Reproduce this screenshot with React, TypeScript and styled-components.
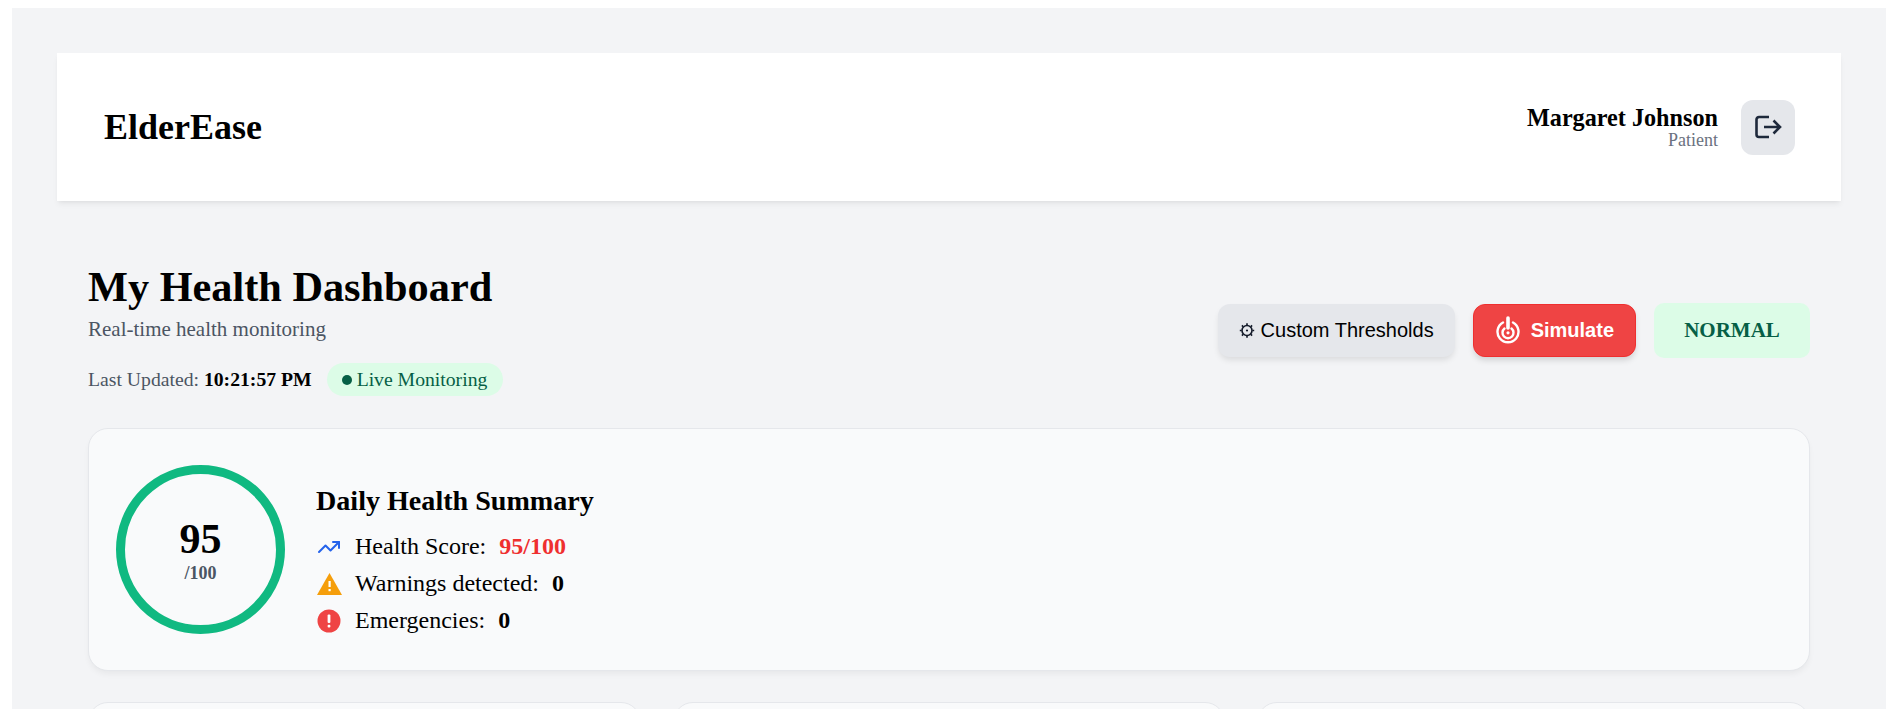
import React from 'react';
import styled, { createGlobalStyle } from 'styled-components';
import { TrendingUp } from 'lucide-react';

const GlobalStyle = createGlobalStyle`
  html, body {
    margin: 0;
    height: 709px;
    overflow: hidden;
    background: #ffffff;
    font-family: "Liberation Serif", "Times New Roman", serif;
    color: #000000;
  }
`;

const Page = styled.div`
  margin: 8px 5px 0 12px;
  padding: 45px 45px 40px;
  background: #f3f4f6;
  min-height: 900px;
`;

const Header = styled.header`
  height: 148px;
  padding: 0 46px 0 47px;
  background: #ffffff;
  box-shadow: 0 4px 6px -1px rgba(0, 0, 0, 0.06), 0 2px 4px -2px rgba(0, 0, 0, 0.06);
  display: flex;
  align-items: center;
  justify-content: space-between;
`;

const Logo = styled.div`
  font-size: 36px;
  font-weight: 700;
`;

const UserArea = styled.div`
  display: flex;
  align-items: center;
  gap: 23px;
`;

const UserText = styled.div`
  text-align: right;
`;

const UserName = styled.div`
  font-size: 24.2px;
  font-weight: 700;
  line-height: 26px;
`;

const UserRole = styled.div`
  font-size: 18px;
  line-height: 19px;
  color: #6b7280;
`;

const IconButton = styled.button`
  width: 54px;
  height: 55px;
  border: none;
  border-radius: 12px;
  background: #e5e7eb;
  display: flex;
  align-items: center;
  justify-content: center;
  padding: 0;
`;

const Main = styled.main`
  padding: 0 31px;
`;

const TitleRow = styled.section`
  display: flex;
  justify-content: space-between;
  align-items: center;
  margin-top: 61px;
`;

const Title = styled.h1`
  margin: 0;
  font-size: 42.3px;
  font-weight: 700;
  line-height: 50px;
`;

const Subtitle = styled.p`
  margin: 5px 0 0;
  font-size: 21px;
  line-height: 24px;
  color: #4b5563;
`;

const StatusLine = styled.div`
  display: flex;
  align-items: center;
  gap: 15px;
  margin-top: 22px;
  font-size: 19.7px;
  color: #4b5563;
`;

const Time = styled.strong`
  color: #000000;
`;

const LiveBadge = styled.span`
  display: inline-flex;
  align-items: center;
  height: 33px;
  padding: 0 16px 0 15px;
  border-radius: 17px;
  background: #dcfce7;
  color: #065f46;
  font-size: 19.7px;
`;

const LiveDot = styled.i`
  width: 10px;
  height: 10px;
  margin-right: 5px;
  border-radius: 50%;
  background: #065f46;
`;

const Actions = styled.div`
  display: flex;
  align-items: center;
  gap: 18px;
  margin-top: 2px;
`;

const ThresholdButton = styled.button`
  height: 53px;
  padding: 0 21px;
  border: none;
  border-radius: 12px;
  background: #e5e7eb;
  color: #000000;
  font-family: "Liberation Sans", Arial, sans-serif;
  font-size: 20px;
  box-shadow: 0 4px 6px -1px rgba(0, 0, 0, 0.1);
  display: flex;
  align-items: center;
  gap: 6px;
`;

const SimulateButton = styled.button`
  height: 53px;
  padding: 0 21px 0 22px;
  border: 1px solid #ef2f2f;
  border-radius: 12px;
  background: #ef4444;
  color: #ffffff;
  font-family: "Liberation Sans", Arial, sans-serif;
  font-size: 20px;
  font-weight: 700;
  box-shadow: 0 4px 6px -1px rgba(0, 0, 0, 0.15);
  display: flex;
  align-items: center;
  gap: 11px;
`;

const StatusPill = styled.div`
  height: 55px;
  width: 156px;
  border-radius: 10px;
  background: #dcfce7;
  color: #065f46;
  font-size: 21px;
  font-weight: 700;
  display: flex;
  align-items: center;
  justify-content: center;
`;

const SummaryCard = styled.section`
  margin-top: 32px;
  height: 243px;
  box-sizing: border-box;
  padding: 0 27px;
  background: #f9fafb;
  border: 1px solid #e5e7eb;
  border-radius: 20px;
  box-shadow: 0 4px 6px -1px rgba(0, 0, 0, 0.05);
  display: flex;
  align-items: center;
  gap: 31px;
`;

const ScoreRing = styled.div`
  width: 169px;
  height: 169px;
  box-sizing: border-box;
  border: 9px solid #10b981;
  border-radius: 50%;
  display: flex;
  flex-direction: column;
  align-items: center;
  justify-content: center;
`;

const ScoreValue = styled.div`
  font-size: 42px;
  font-weight: 700;
  line-height: 47px;
`;

const ScoreTotal = styled.div`
  font-size: 18px;
  font-weight: 700;
  line-height: 20px;
  color: #4b5563;
`;

const SummaryBody = styled.div`
  display: flex;
  flex-direction: column;
  margin-top: 26px;
`;

const SummaryTitle = styled.h2`
  margin: -1px 0 11px;
  font-size: 28.1px;
  font-weight: 700;
  line-height: 32px;
`;

const SummaryRow = styled.div`
  display: flex;
  align-items: center;
  height: 37px;
  font-size: 24px;
`;

const RowIcon = styled.span`
  width: 26px;
  margin-right: 13px;
  display: flex;
  justify-content: center;
`;

const RowValue = styled.strong<{ $alert?: boolean }>`
  margin-left: 13px;
  color: ${(p) => (p.$alert ? '#ef2f2f' : '#000000')};
`;

const CardGrid = styled.section`
  margin-top: 31px;
  display: grid;
  grid-template-columns: repeat(3, 1fr);
  gap: 32px;
`;

const EmptyCard = styled.div`
  height: 200px;
  background: #f9fafb;
  border: 1px solid #e5e7eb;
  border-radius: 20px;
`;

const LogoutIcon = () => (
  <svg width="27" height="24" viewBox="0 0 27 24" fill="none" stroke="#1e293b" strokeWidth="2.6">
    <path d="M14 2H4a2.5 2.5 0 0 0-2.5 2.5v15A2.5 2.5 0 0 0 4 22h10" />
    <path d="M9 12h16M18.500 5.500 25 12l-6.500 6.500" />
  </svg>
);

const GearIcon = () => (
  <svg width="16" height="17" viewBox="0 0 16 17" fill="none" stroke="#111827" strokeWidth="1.6">
    <circle cx="8" cy="8.500" r="5" />
    <circle cx="8" cy="8.500" r="1.100" fill="#111827" stroke="none" />
    <path d="M8 1.200v1.800M8 14v1.800M.8 8.500h1.800M13.400 8.500h1.800M2.900 3.400l1.200 1.200M11.900 12.400l1.200 1.200M2.900 13.600l1.200-1.200M11.900 4.600l1.200-1.200" />
  </svg>
);

const SimulateIcon = () => (
  <svg width="24" height="28" viewBox="0 0 24 28" fill="none" stroke="#ffffff" strokeWidth="2.4">
    <path d="M7 6.500a10.500 10.500 0 1 0 10 0" strokeLinecap="round" />
    <path d="M8.500 12.500a5.500 5.500 0 1 0 7 0" strokeLinecap="round" />
    <path d="M12 2v10" strokeWidth="3.6" strokeLinecap="round" />
    <circle cx="12" cy="16.800" r="1.600" fill="#ffffff" stroke="none" />
  </svg>
);

const WarningIcon = () => (
  <svg width="25" height="22" viewBox="0 0 25 22">
    <path d="M12.500 0 25 22H0Z" fill="#f59e0b" />
    <rect x="11.500" y="8" width="2.200" height="6" fill="#ffffff" />
    <rect x="11.500" y="16" width="2.200" height="2.200" fill="#ffffff" />
  </svg>
);

const ErrorIcon = () => (
  <svg width="24" height="24" viewBox="0 0 24 24">
    <circle cx="12" cy="12" r="11.500" fill="#ef4444" />
    <rect x="10.600" y="5.500" width="2.800" height="8.500" rx="1" fill="#ffffff" />
    <rect x="10.600" y="15.800" width="2.800" height="2.800" rx="1" fill="#ffffff" />
  </svg>
);

const App = () => (
  <Page>
    <GlobalStyle />
    <Header>
      <Logo>ElderEase</Logo>
      <UserArea>
        <UserText>
          <UserName>Margaret Johnson</UserName>
          <UserRole>Patient</UserRole>
        </UserText>
        <IconButton>
          <LogoutIcon />
        </IconButton>
      </UserArea>
    </Header>
    <Main>
      <TitleRow>
        <div>
          <Title>My Health Dashboard</Title>
          <Subtitle>Real-time health monitoring</Subtitle>
          <StatusLine>
            <span>
              Last Updated: <Time>10:21:57 PM</Time>
            </span>
            <LiveBadge>
              <LiveDot />
              Live Monitoring
            </LiveBadge>
          </StatusLine>
        </div>
        <Actions>
          <ThresholdButton>
            <GearIcon />
            Custom Thresholds
          </ThresholdButton>
          <SimulateButton>
            <SimulateIcon />
            Simulate
          </SimulateButton>
          <StatusPill>NORMAL</StatusPill>
        </Actions>
      </TitleRow>
      <SummaryCard>
        <ScoreRing>
          <ScoreValue>95</ScoreValue>
          <ScoreTotal>/100</ScoreTotal>
        </ScoreRing>
        <SummaryBody>
          <SummaryTitle>Daily Health Summary</SummaryTitle>
          <SummaryRow>
            <RowIcon>
              <TrendingUp size={24} color="#2563eb" strokeWidth={2} />
            </RowIcon>
            Health Score: <RowValue $alert>95/100</RowValue>
          </SummaryRow>
          <SummaryRow>
            <RowIcon>
              <WarningIcon />
            </RowIcon>
            Warnings detected: <RowValue>0</RowValue>
          </SummaryRow>
          <SummaryRow>
            <RowIcon>
              <ErrorIcon />
            </RowIcon>
            Emergencies: <RowValue>0</RowValue>
          </SummaryRow>
        </SummaryBody>
      </SummaryCard>
      <CardGrid>
        <EmptyCard />
        <EmptyCard />
        <EmptyCard />
      </CardGrid>
    </Main>
  </Page>
);

export default App;
